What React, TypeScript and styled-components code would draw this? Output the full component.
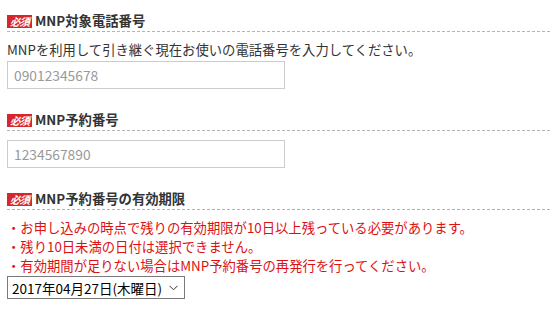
import React from "react";
import styled, { createGlobalStyle } from "styled-components";

const GlobalStyle = createGlobalStyle`
  html, body {
    margin: 0;
    padding: 0;
    background: #fff;
  }
  body {
    font-family: "Noto Sans CJK JP", "Noto Sans", sans-serif;
    color: #333;
  }
`;

const Page = styled.div`
  padding: 12px 0 0 7px;
`;

const Section = styled.section`
  & + & {
    margin-top: 22px;
  }
`;

const Heading = styled.h3`
  display: flex;
  align-items: center;
  margin: 0;
  height: 18px;
  padding-bottom: 1px;
  border-bottom: 1px dashed #b4b4b4;
  font-size: 13.33px;
  font-weight: bold;
  line-height: 18px;
  color: #333;
`;

const Badge = styled.span`
  display: inline-flex;
  align-items: center;
  justify-content: center;
  width: 25px;
  height: 13px;
  margin-right: 3px;
  background: #d8262f;
  color: #fff;
  font-size: 10.5px;
  font-weight: bold;
  font-style: italic;
  line-height: 13px;
  letter-spacing: -1px;
`;

const Body = styled.div<{ $top: number }>`
  padding-top: ${(p) => p.$top}px;
`;

const Note = styled.p`
  margin: 0 0 2px;
  font-size: 13.33px;
  line-height: 19px;
  color: #333;
`;

const Warn = styled.ul`
  margin: 0;
  padding: 0;
  list-style: none;
  font-size: 13.33px;
  line-height: 19px;
  color: #dd1111;

  li::before {
    content: "・";
  }
`;

const TextInput = styled.input`
  display: block;
  box-sizing: border-box;
  width: 278px;
  height: 28px;
  margin: 0;
  padding: 0 6px;
  border: 1px solid #cccccc;
  font-family: inherit;
  font-size: 13.8px;
  color: #333;
  outline: none;

  &::placeholder {
    color: #999;
  }
`;

const SelectWrap = styled.div`
  position: relative;
  width: 178px;
  margin-top: 1px;
`;

const Select = styled.select`
  display: block;
  box-sizing: border-box;
  width: 178px;
  height: 23px;
  margin: 0;
  padding: 0 0 0 4px;
  border: 1px solid #7a7a7a;
  border-radius: 0;
  background: #fff;
  appearance: none;
  font-family: inherit;
  font-size: 13.5px;
  color: #000;
`;

const Chevron = styled.svg`
  position: absolute;
  right: 7px;
  top: 9px;
  pointer-events: none;
`;

export default function App() {
  return (
    <>
      <GlobalStyle />
      <Page>
        <Section>
          <Heading>
            <Badge>必須</Badge>MNP対象電話番号
          </Heading>
          <Body $top={8}>
            <Note>MNPを利用して引き継ぐ現在お使いの電話番号を入力してください。</Note>
            <TextInput placeholder="09012345678" />
          </Body>
        </Section>
        <Section>
          <Heading>
            <Badge>必須</Badge>MNP予約番号
          </Heading>
          <Body $top={9}>
            <TextInput placeholder="1234567890" />
          </Body>
        </Section>
        <Section>
          <Heading>
            <Badge>必須</Badge>MNP予約番号の有効期限
          </Heading>
          <Body $top={8}>
            <Warn>
              <li>お申し込みの時点で残りの有効期限が10日以上残っている必要があります。</li>
              <li>残り10日未満の日付は選択できません。</li>
              <li>有効期間が足りない場合はMNP予約番号の再発行を行ってください。</li>
            </Warn>
            <SelectWrap>
              <Select defaultValue="2017-04-27">
                <option value="2017-04-27">2017年04月27日(木曜日)</option>
              </Select>
              <Chevron width="9" height="6" viewBox="0 0 9 6">
                <path d="M0.5 0.8 L4.5 4.8 L8.5 0.8" fill="none" stroke="#333" strokeWidth="1" />
              </Chevron>
            </SelectWrap>
          </Body>
        </Section>
      </Page>
    </>
  );
}
